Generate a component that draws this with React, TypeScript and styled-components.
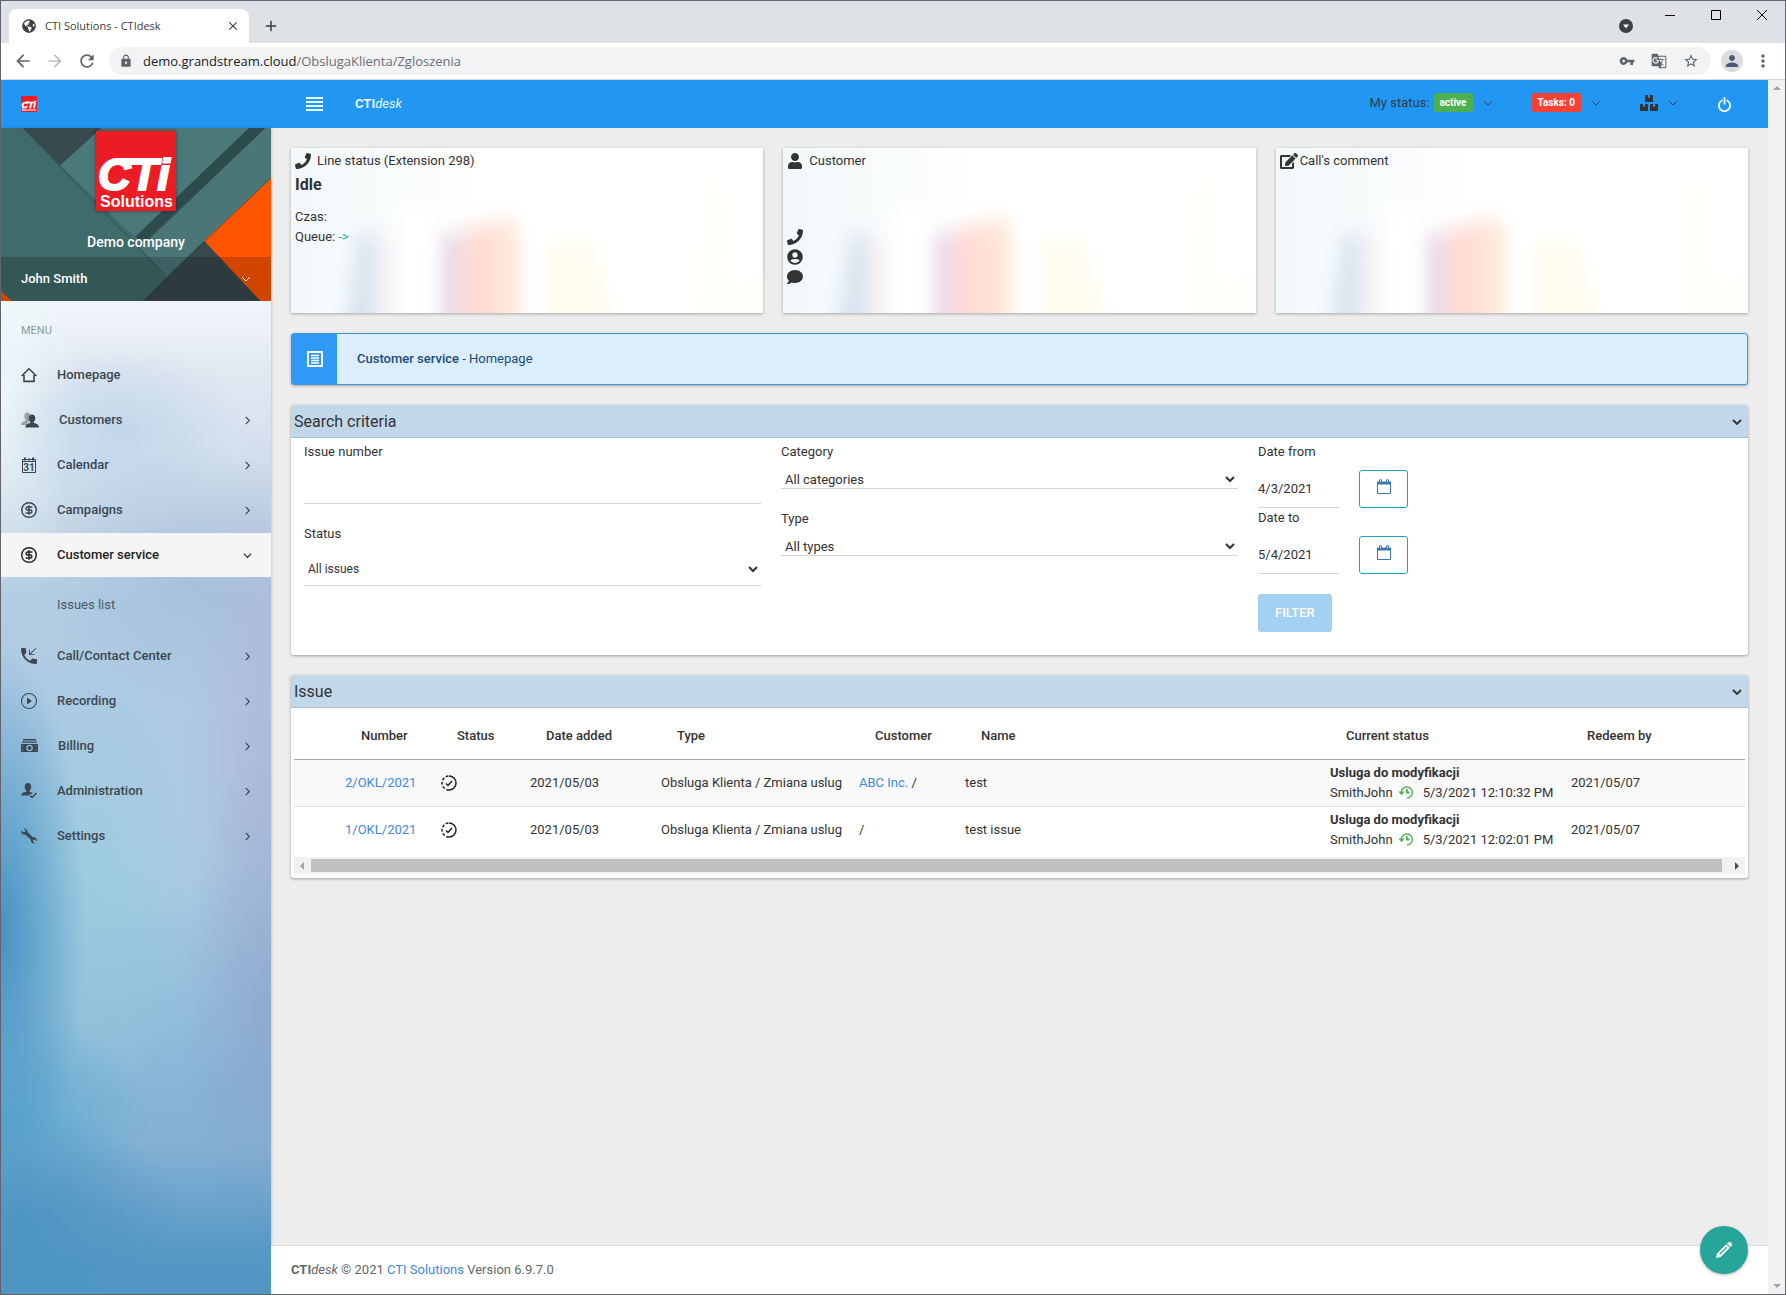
import React from 'react';
import styled, { createGlobalStyle, css } from 'styled-components';
import {
  MdAdd, MdArrowBack, MdArrowForward, MdClose, MdGTranslate, MdLock,
  MdMoreVert, MdPerson, MdPhoneCallback, MdRefresh, MdStarBorder, MdVpnKey,
} from 'react-icons/md';
import { FaBoxes, FaComment, FaEdit, FaGlobeAmericas, FaPhone, FaUser, FaUserCircle } from 'react-icons/fa';
import { ImHistory, ImPencil, ImSwitch } from 'react-icons/im';
import { BsPlayCircle } from 'react-icons/bs';
import { CircleDollarSign } from 'lucide-react';

const GlobalStyle = createGlobalStyle`
  *, *::before, *::after { box-sizing: border-box; }
  body {
    margin: 0;
    background: #ededed;
    color: #333;
    font: 13px/20px Roboto, "Liberation Sans", sans-serif;
  }
  a { color: #4289db; text-decoration: none; }
  button, input, select { font: inherit; color: inherit; }
  button { cursor: pointer; }
  svg { display: block; flex: none; }
`;

/* ---------- browser window ---------- */

const Window = styled.div`
  display: flex;
  flex-direction: column;
  min-height: 100vh;
  border: 1px solid #62656c;
`;

const PlainButton = styled.button`
  display: inline-flex;
  align-items: center;
  justify-content: center;
  padding: 0;
  border: 0;
  background: none;
`;

const TabStrip = styled.div`
  display: flex;
  align-items: flex-start;
  height: 42px;
  padding: 8px 0 0 8px;
  background: #dee1e6;
  color: #3c4043;
`;

const Tab = styled.div`
  display: flex;
  align-items: center;
  gap: 9px;
  width: 240px;
  height: 34px;
  padding: 0 9px 0 13px;
  border-radius: 8px 8px 0 0;
  background: #fff;
  font-family: "Open Sans", "Noto Sans", sans-serif;
  font-size: 11px;
`;

const TabTitle = styled.span`
  flex: 1;
`;

const NewTab = styled(PlainButton)`
  width: 28px;
  height: 34px;
  margin-left: 8px;
`;

const TabSearch = styled(PlainButton)`
  height: 34px;
  margin: 0 14px 0 auto;
`;

const WindowButton = styled(PlainButton)`
  width: 46px;
  height: 12px;
`;

const AddressRow = styled.div`
  display: flex;
  align-items: center;
  gap: 10px;
  height: 37px;
  padding: 0 12px;
  border-bottom: 1px solid #d5d8dc;
  background: #fff;
  color: #5f6368;
`;

const NavButtons = styled.div`
  display: flex;
  gap: 12px;
`;

const AddressBar = styled.div`
  display: flex;
  flex: 1;
  align-items: center;
  height: 28px;
  margin-left: 2px;
  padding: 0 12px 0 10px;
  border-radius: 14px;
  background: #f1f3f4;
  font-family: "Open Sans", "Noto Sans", sans-serif;
  font-size: 13px;
`;

const Address = styled.span`
  flex: 1;
  margin-left: 10px;
  color: #6b6f74;
  b { color: #202124; font-weight: 400; }
`;

const AddressActions = styled.div`
  display: flex;
  gap: 16px;
`;

const Avatar = styled(PlainButton)`
  width: 22px;
  height: 22px;
  border-radius: 50%;
  background: #dadce0;
  color: #4d5a73;
`;

const Viewport = styled.div`
  display: flex;
  flex: 1;
`;

const Page = styled.div`
  display: flex;
  flex: 1;
  flex-direction: column;
  min-width: 0;
`;

const PageScroll = styled.div`
  display: flex;
  flex-direction: column;
  justify-content: space-between;
  align-items: center;
  width: 17px;
  padding: 6px 0;
  background: #f1f1f1;
`;

const Arrow = styled.span<{ $dir: 'up' | 'down' | 'left' | 'right'; $color?: string }>`
  width: 0;
  height: 0;
  border: 4px solid transparent;
  ${({ $dir, $color = '#a3a3a3' }) => {
    if ($dir === 'up') return css`border-top: 0; border-bottom-color: ${$color};`;
    if ($dir === 'down') return css`border-bottom: 0; border-top-color: ${$color};`;
    if ($dir === 'left') return css`border-left: 0; border-right-color: ${$color};`;
    return css`border-right: 0; border-left-color: ${$color};`;
  }}
`;

/* ---------- application header ---------- */

const Header = styled.header`
  display: flex;
  align-items: center;
  height: 48px;
  padding: 0 36px 0 20px;
  background: #2196f3;
  color: #fff;
`;

const HeaderLeft = styled.div`
  display: flex;
  align-items: center;
  width: 285px;
`;

const Brand = styled.a`
  margin-left: 31px;
  color: #e8f8ff;
  font-weight: 700;
  i { font-weight: 400; }
`;

const HeaderTools = styled.div`
  display: flex;
  align-items: center;
  gap: 32px;
  margin-left: auto;
`;

const HeaderItem = styled.button`
  display: flex;
  align-items: center;
  gap: 10px;
  padding: 0 7px 3px 0;
  border: 0;
  background: none;
  color: #2f3d4b;
`;

const StatusText = styled.span`
  display: flex;
  align-items: center;
  gap: 4px;
`;

const Badge = styled.span<{ $color: string }>`
  padding: 0 6px;
  border-radius: 2px;
  background: ${({ $color }) => $color};
  color: #fff;
  font-size: 10px;
  font-weight: 700;
  line-height: 19px;
`;

const Body = styled.div`
  display: flex;
  flex: 1;
`;

/* ---------- sidebar ---------- */

const Sidebar = styled.aside`
  flex: none;
  width: 270px;
  box-shadow: 1px 0 2px rgba(0, 0, 0, 0.15);
  background:
    linear-gradient(to top, rgba(72, 146, 192, 0.75) 30px, rgba(76, 146, 192, 0) 150px),
    radial-gradient(160px 110px at 20px 1090px, rgba(72, 146, 192, 0.8), rgba(72, 146, 192, 0)),
    radial-gradient(85px 280px at 0 800px, rgba(60, 140, 192, 0.9), rgba(74, 150, 198, 0.55) 50%, rgba(80, 155, 200, 0)),
    radial-gradient(150px 110px at 0 990px, rgba(88, 168, 208, 0.9), rgba(88, 168, 208, 0)),
    radial-gradient(90px 260px at 100% 880px, rgba(138, 160, 200, 0.6), rgba(138, 160, 200, 0)),
    radial-gradient(90px 320px at 100% 620px, rgba(176, 172, 210, 0.55), rgba(176, 172, 210, 0)),
    radial-gradient(100px 260px at 90px 780px, rgba(146, 204, 220, 0.6), rgba(146, 204, 220, 0)),
    radial-gradient(150px 130px at 190px 450px, rgba(158, 184, 214, 0.6), rgba(158, 184, 214, 0)),
    radial-gradient(120px 90px at 120px 300px, rgba(180, 208, 232, 0.6), rgba(180, 208, 232, 0)),
    radial-gradient(80px 200px at 0 270px, rgba(238, 250, 250, 0.8), rgba(238, 250, 250, 0)),
    linear-gradient(#f0f6fa 173px, #e1e7f1 250px, #d3dfee 330px, #c5d6e6 400px, #b0cde3 470px, #aecae2 600px, #abcbe2 740px, #98c0dd 850px, #88b4d6 960px, #82afd4 1060px, #6da4cc);
`;

const Profile = styled.div`
  position: relative;
  display: flex;
  flex-direction: column;
  align-items: center;
  height: 173px;
  padding-top: 3px;
  overflow: hidden;
  color: #fff;
`;

const ProfileArt = styled.svg`
  position: absolute;
  inset: 0;
  width: 100%;
  height: 100%;
`;

const Company = styled.div`
  position: relative;
  margin-top: 21px;
  font-size: 14px;
  font-weight: 500;
`;

const LogoBox = styled.div`
  position: relative;
  box-shadow: 0 0 3px rgba(0, 0, 0, 0.5);
`;

const UserBar = styled(PlainButton)`
  position: relative;
  justify-content: space-between;
  width: 100%;
  height: 44px;
  margin-top: auto;
  padding: 0 20px;
  background: rgba(0, 0, 0, 0.18);
  color: #fff;
  font-weight: 500;
`;

const MenuTitle = styled.div`
  padding: 20px 20px 12px;
  color: #8d959c;
  font-size: 11px;
`;

const MenuList = styled.nav`
  display: flex;
  flex-direction: column;
  gap: 1px;
`;

const MenuLink = styled.a<{ $active?: boolean }>`
  display: flex;
  align-items: center;
  gap: 20px;
  height: 44px;
  padding: 0 19px 0 20px;
  background: ${({ $active }) => ($active ? '#f5f5f5' : 'none')};
  color: ${({ $active }) => ($active ? '#222' : '#3b4750')};
  font-weight: 500;
  span { flex: 1; }
`;

const SubLink = styled.a`
  padding: 17px 20px 18px 56px;
  color: #4c5862;
`;

/* ---------- content ---------- */

const Main = styled.main`
  display: flex;
  flex: 1;
  flex-direction: column;
  min-width: 0;
`;

const Content = styled.div`
  display: flex;
  flex: 1;
  flex-direction: column;
  gap: 20px;
  padding: 20px;
`;

const Cards = styled.div`
  display: grid;
  grid-template-columns: repeat(3, 1fr);
  gap: 20px;
`;

const Card = styled.section`
  position: relative;
  height: 165px;
  padding: 3px 4px;
  background: #fff;
  box-shadow: 0 1px 3px rgba(0, 0, 0, 0.3);
  overflow: hidden;
`;

const CardArt = styled.svg`
  position: absolute;
  inset: 0;
  width: 100%;
  height: 100%;
`;

const CardBody = styled.div`
  position: relative;
`;

const CardTitle = styled.div<{ $gap: number }>`
  display: flex;
  align-items: center;
  gap: ${({ $gap }) => $gap}px;
`;

const Idle = styled.h2`
  margin: 4px 0 12px;
  font-size: 16px;
  line-height: 20px;
  font-weight: 700;
`;

const QueueLink = styled.a`
  color: #26a6b8;
`;

const ContactIcons = styled.div`
  display: flex;
  flex-direction: column;
  gap: 4px;
  padding-top: 58px;
`;

const Alert = styled.section`
  display: flex;
  align-items: center;
  height: 52px;
  border: 1px solid #4197d6;
  border-radius: 3px;
  background: #daeefd;
  box-shadow: 0 1px 3px rgba(0, 0, 0, 0.3);
  color: #1d4d76;
  b { font-weight: 500; }
`;

const AlertIcon = styled.div`
  display: flex;
  align-items: center;
  align-self: stretch;
  justify-content: center;
  width: 45px;
  margin-right: 20px;
  background: #2e9af5;
`;

const Panel = styled.section`
  border-radius: 3px;
  background: #fff;
  box-shadow: 0 1px 3px rgba(0, 0, 0, 0.35);
  overflow: hidden;
`;

const PanelHeader = styled.header`
  display: flex;
  align-items: center;
  justify-content: space-between;
  height: 33px;
  padding: 1px 6px 0 3px;
  border-bottom: 1px solid #a9bccd;
  background: #c1d7ea;
`;

const PanelTitle = styled.h3`
  margin: 0;
  font-size: 16px;
  font-weight: 400;
`;

const SearchForm = styled.form`
  display: grid;
  grid-template-columns: repeat(3, 1fr);
  gap: 20px;
  padding: 4px 33px 23px 13px;
`;

const Column = styled.div<{ $gap: number }>`
  display: flex;
  flex-direction: column;
  align-items: stretch;
  gap: ${({ $gap }) => $gap}px;
`;

const Field = styled.div`
  display: flex;
  flex-direction: column;
`;

const line = css`
  border: 0;
  border-bottom: 1px solid #d5d5d5;
  border-radius: 0;
  background: #fff;
  outline: 0;
`;

const TextInput = styled.input`
  ${line}
  height: 42px;
  padding: 0;
`;

const Select = styled.select<{ $tall?: boolean }>`
  ${line}
  height: ${({ $tall }) => ($tall ? 34 : 20)}px;
  margin-top: ${({ $tall }) => ($tall ? 8 : 7)}px;
  padding: ${({ $tall }) => ($tall ? 0 : 2)}px 1px 0 0;
  font-size: ${({ $tall }) => ($tall ? 12 : 13)}px;
`;

const DateRow = styled.div`
  display: flex;
  gap: 20px;
  margin-top: 8px;
`;

const DateInput = styled.input`
  ${line}
  width: 81px;
  height: 38px;
  padding: 0;
`;

const DateButton = styled(PlainButton)`
  width: 49px;
  height: 38px;
  padding-bottom: 4px;
  border: 1px solid #1ba5c1;
  border-radius: 3px;
  background: #fff;
`;

const FilterButton = styled.button`
  align-self: flex-start;
  height: 38px;
  margin-top: 20px;
  padding: 0 17px;
  border: 0;
  border-radius: 3px;
  background: #a3d1f2;
  color: #fff;
  font-weight: 500;
`;

const TableWrap = styled.div`
  padding: 0 3px 4px;
`;

const Table = styled.table`
  width: 100%;
  border-collapse: collapse;
  table-layout: fixed;
  th, td { padding: 0 9px; text-align: left; white-space: nowrap; }
  th {
    height: 51px;
    padding: 6px 0 0 25px;
    border-bottom: 1px solid #aaa;
    font-weight: 500;
  }
  td { height: 47px; padding-right: 0; }
  tbody tr + tr td { border-top: 1px solid #ddd; }
  tbody tr:nth-child(odd) { background: #f9f9f9; }
`;

const StatusUser = styled.div`
  display: flex;
  align-items: center;
  svg { margin: 0 10px 0 5px; color: #4caf50; }
`;

const TableScroll = styled.div`
  display: flex;
  align-items: center;
  height: 17px;
  margin-top: 4px;
  padding: 0 6px;
  background: #f1f1f1;
`;

const Thumb = styled.div`
  flex: 1;
  height: 13px;
  margin: 0 13px 0 7px;
  background: #c1c1c1;
`;

const Footer = styled.footer`
  position: relative;
  padding: 14px 20px;
  border-top: 1px solid #ddd;
  background: #fff;
  color: #666;
`;

const Fab = styled(PlainButton)`
  position: absolute;
  right: 20px;
  bottom: 20px;
  width: 48px;
  height: 48px;
  border-radius: 50%;
  background: #26a69a;
  box-shadow: 0 1px 3px rgba(0, 0, 0, 0.3);
  color: #fff;
`;

/* ---------- drawings ---------- */

const Chevron = ({ dir, size = 10, weight = 1 }: { dir: 'right' | 'down'; size?: number; weight?: number }) => (
  <svg width={size} height={size} viewBox="0 0 10 10" fill="none" stroke="currentColor" strokeWidth={weight}>
    <path d={dir === 'right' ? 'M3 1l4 4-4 4' : 'M1 3l4 4 4-4'} />
  </svg>
);

const Logo = ({ size }: { size: number }) => (
  <svg width={size} height={size} viewBox="0 0 80 80" role="img" aria-label="CTi Solutions">
    <rect width="80" height="80" fill="#ec1c24" />
    <g fill="#fff" fontFamily="Liberation Sans, Arial, sans-serif" fontWeight="700">
      <text x="2" y="59" fontSize="45" fontStyle="italic" stroke="#fff" strokeWidth="2">CTi</text>
      <rect x="24" y="27" width="14" height="7" />
      <text x="4" y="76" fontSize="16">Solutions</text>
    </g>
  </svg>
);

const HomeIcon = () => (
  <svg width="16" height="16" viewBox="0 0 16 16" fill="none" stroke="currentColor" strokeWidth="1.6">
    <path d="M.6 9L8 1.8 15.4 9M3 8v6.400h3.400M13 8v6.400H9.600M5 14.400h6" />
  </svg>
);

const UsersIcon = () => (
  <svg width="18" height="16" viewBox="0 0 18 16">
    <path fill="#9aa3ab" d="M6.500.5c2 0 3 1.500 3 3.500 0 1.600-.8 3-1.500 3.800v1.700L5 13H0c0-2.500 1.500-3.400 4.600-4V7.800C3.900 7 3.300 5.600 3.300 4 3.300 2 4.500.5 6.500.5z" />
    <path fill="currentColor" d="M11 2.500c2.200 0 3.300 1.500 3.300 3.700 0 1.700-.8 3-1.600 3.800v1.100c3.200.4 5 1.500 5.300 4.400H4.300c.2-2.900 2-4 5-4.400V10c-.9-.8-1.600-2.100-1.600-3.800 0-2.200 1.100-3.700 3.300-3.700z" />
  </svg>
);

const Calendar31Icon = () => (
  <svg width="16" height="16" viewBox="0 0 16 16">
    <path fill="none" stroke="currentColor" d="M1.500 2.500h13v13h-13zM1.500 4.500h13" />
    <path stroke="currentColor" strokeWidth="2" d="M4 .5v3M12 .5v3M8 1.500v2" />
    <text x="8" y="13.500" textAnchor="middle" fontSize="10" fontWeight="700" fill="currentColor">31</text>
  </svg>
);

const DollarIcon = () => <CircleDollarSign size={16} viewBox="1 1 22 22" strokeWidth={2} />;

const CashIcon = () => (
  <svg width="17" height="16" viewBox="0 0 17 16">
    <path fill="currentColor" d="M2 1h13v1.400H2zM1 3.400h15v1.400H1z" />
    <path fill="currentColor" fillRule="evenodd" d="M0 6h17v8H0zM8.500 6.700a3.300 3.300 0 100 6.600 3.300 3.300 0 000-6.600zM1.500 7.500v1.300l1.300-1.300zM15.500 7.500v1.300l-1.300-1.300zM1.500 12.500v-1.300l1.300 1.300zM15.500 12.500v-1.300l-1.300 1.300z" />
    <circle cx="8.500" cy="10" r="2" fill="currentColor" />
  </svg>
);

const UserCheckIcon = () => (
  <svg width="16" height="16" viewBox="0 0 16 16" fill="currentColor">
    <path d="M7 0c2 0 3.200 1.500 3.200 3.700 0 1.700-.8 3.200-1.600 4v1.200c1.400.2 2.600.6 3.400 1.200L10.500 11.500 9 10.600 8 12.600H0c.2-2.400 2-3.400 5.300-3.700V7.700c-.9-.8-1.600-2.300-1.600-4C3.700 1.500 5 0 7 0z" />
    <path d="M9 12.500l2 2 4.500-4.500" fill="none" stroke="currentColor" strokeWidth="1.500" />
  </svg>
);

const WrenchIcon = () => (
  <svg width="16" height="16" viewBox="0 0 16 16" fill="currentColor">
    <path d="M2.500.5l2 2L4 4l-1.500.6L.3 2.500C-.3 5 1.500 7.100 4.200 6.600l5.500 5C9.400 14.200 11.500 16 14 15.500l-2-2 .5-1.500 1.500-.5 1.900 2c.4-2.500-1.300-4.600-4-4.200l-5.400-5C6.800 1.700 4.800 0 2.500.5z" />
  </svg>
);

const NotesIcon = () => (
  <svg width="18" height="18" viewBox="0 0 18 18" fill="none" stroke="#fff">
    <path strokeWidth="2" d="M2 2h14v14H2z" />
    <path strokeWidth="1.300" d="M5 5.500h8M5 8h8M5 10.500h8M5 13h8" />
  </svg>
);

const CalendarIcon = () => (
  <svg width="16" height="16" viewBox="0 0 16 16" fill="none" stroke="#3a78b5">
    <path d="M1.500 3.500h13v11h-13z" />
    <path strokeWidth="3" d="M1 4h14" />
    <path strokeWidth="1" d="M3.500 3V.8h2V3M10.500 3V.8h2V3" fill="#fff" />
  </svg>
);

const ProgressCheckIcon = () => (
  <svg width="16" height="16" viewBox="0 0 16 16" fill="none" stroke="#222" strokeWidth="1.500">
    <path d="M8 1a7 7 0 010 14" />
    <path d="M8 15A7 7 0 018 1" strokeDasharray="2.800 1.800" />
    <path d="M5 8.500l2 2 4-4.500" />
  </svg>
);

const MenuIcon = () => (
  <svg width="18" height="14" viewBox="0 0 18 14" fill="#e8f8ff">
    <path d="M0 0h17v2H0zM0 4h17v2H0zM0 8h17v2H0zM0 12h17v2H0z" />
  </svg>
);

const ProfileBackground = () => (
  <ProfileArt viewBox="0 0 270 173" preserveAspectRatio="none" aria-hidden="true">
    <rect width="270" height="173" fill="#3f6b6b" />
    <path fill="#37484e" d="M22 0h78L59 37z" />
    <path fill="#4b7878" d="M100 0h150L135 110 59 37z" />
    <path fill="#2d4b4c" d="M248 0h16L146 115l-12-6z" />
    <path fill="#4a7677" d="M264 0h6v50l-67 63-38 36-26-30z" />
    <path fill="#ff5500" d="M270 50v123h-12l-55-60zM0 163l11 10H0z" />
    <path fill="#37494e" d="M203 113l56 60H142z" />
    <path fill="none" stroke="#223c3d" strokeOpacity=".5" d="M22 0l143 148M100 0L59 37M264 0L141 118M142 173L270 50M203 113l56 60" />
  </ProfileArt>
);

const CardBackground = ({ id }: { id: string }) => (
  <CardArt viewBox="0 0 472 165" preserveAspectRatio="none" aria-hidden="true">
    <defs>
      <filter id={id} x="-50%" y="-50%" width="200%" height="200%">
        <feGaussianBlur stdDeviation="8 10" />
      </filter>
      <linearGradient id={`${id}-sky`}>
        <stop offset="0" stopColor="#f2f8fa" />
        <stop offset="1" stopColor="#fff" />
      </linearGradient>
    </defs>
    <rect width="200" height="165" fill={`url(#${id}-sky)`} />
    <g filter={`url(#${id})`}>
      <path fill="#dce5f0" d="M66 86h20v100H52z" />
      <path fill="#f8eef1" d="M90 90h12v90H90z" />
      <path fill="#fff" d="M110 60h32v130h-32z" />
      <path fill="#ecdae8" d="M150 86h30v110h-30z" />
      <path fill="#ffdcd5" d="M172 82l46-12v130h-46z" />
      <path fill="#fee7d8" d="M204 74h24v110h-24z" />
      <path fill="#fffbef" d="M258 92h42l28 100h-70z" />
      <path fill="#fffefa" d="M410 30h25v100h60v60H400z" />
    </g>
  </CardArt>
);

/* ---------- data ---------- */

type Item = { label: string; icon: React.ReactNode; leaf?: boolean; active?: boolean };

const menuTop: Item[] = [
  { label: 'Homepage', icon: <HomeIcon />, leaf: true },
  { label: 'Customers', icon: <UsersIcon /> },
  { label: 'Calendar', icon: <Calendar31Icon /> },
  { label: 'Campaigns', icon: <DollarIcon /> },
  { label: 'Customer service', icon: <DollarIcon />, active: true },
];

const menuBottom: Item[] = [
  { label: 'Call/Contact Center', icon: <MdPhoneCallback size={16} viewBox="3 3 18 18" /> },
  { label: 'Recording', icon: <BsPlayCircle size={16} /> },
  { label: 'Billing', icon: <CashIcon /> },
  { label: 'Administration', icon: <UserCheckIcon /> },
  { label: 'Settings', icon: <WrenchIcon /> },
];

const columns: { label: string; width?: number }[] = [
  { label: '', width: 42 },
  { label: 'Number', width: 96 },
  { label: 'Status', width: 89 },
  { label: 'Date added', width: 131 },
  { label: 'Type', width: 198 },
  { label: 'Customer', width: 106 },
  { label: 'Name' },
  { label: 'Current status', width: 241 },
  { label: 'Redeem by', width: 183 },
];

const issues = [
  { no: '2/OKL/2021', customer: 'ABC Inc.', name: 'test', time: '5/3/2021 12:10:32 PM' },
  { no: '1/OKL/2021', customer: '', name: 'test issue', time: '5/3/2021 12:02:01 PM' },
];

const MenuItem = ({ label, icon, leaf, active }: Item) => (
  <MenuLink href="#" $active={active}>
    {icon}
    <span>{label}</span>
    {!leaf && <Chevron dir={active ? 'down' : 'right'} weight={1.3} size={9} />}
  </MenuLink>
);

const Browser = () => (
  <>
    <TabStrip>
      <Tab>
        <FaGlobeAmericas size={14} />
        <TabTitle>CTI Solutions - CTIdesk</TabTitle>
        <PlainButton aria-label="Close tab"><MdClose size={14} /></PlainButton>
      </Tab>
      <NewTab aria-label="New tab"><MdAdd size={18} /></NewTab>
      <TabSearch aria-label="Search tabs">
        <svg width="14" height="14" viewBox="0 0 14 14">
          <circle cx="7" cy="7" r="7" fill="#3c4043" />
          <path d="M4 5.500h6L7 9.500z" fill="#fff" />
        </svg>
      </TabSearch>
      <WindowButton aria-label="Minimize">
        <svg width="10" height="10" stroke="#000"><path d="M0 5.500h10" /></svg>
      </WindowButton>
      <WindowButton aria-label="Maximize">
        <svg width="10" height="10" stroke="#000" fill="none"><path d="M.5.5h9v9h-9z" /></svg>
      </WindowButton>
      <WindowButton aria-label="Close">
        <svg width="10" height="10" stroke="#000"><path d="M0 0l10 10M10 0L0 10" /></svg>
      </WindowButton>
    </TabStrip>
    <AddressRow>
      <NavButtons>
        <PlainButton aria-label="Back"><MdArrowBack size={20} /></PlainButton>
        <PlainButton aria-label="Forward"><MdArrowForward size={20} color="#bcbec1" /></PlainButton>
        <PlainButton aria-label="Reload"><MdRefresh size={20} /></PlainButton>
      </NavButtons>
      <AddressBar>
        <MdLock size={14} />
        <Address><b>demo.grandstream.cloud</b>/ObslugaKlienta/Zgloszenia</Address>
        <AddressActions>
          <MdVpnKey size={16} />
          <MdGTranslate size={16} />
          <MdStarBorder size={16} />
        </AddressActions>
      </AddressBar>
      <Avatar aria-label="Profile"><MdPerson size={18} /></Avatar>
      <PlainButton aria-label="Browser menu"><MdMoreVert size={20} /></PlainButton>
    </AddressRow>
  </>
);

export default function App() {
  return (
    <Window>
      <GlobalStyle />
      <Browser />
      <Viewport>
        <Page>
          <Header>
            <HeaderLeft><Logo size={16} /></HeaderLeft>
            <PlainButton aria-label="Toggle menu"><MenuIcon /></PlainButton>
            <Brand href="#">CTI<i>desk</i></Brand>
            <HeaderTools>
              <HeaderItem>
                <StatusText>My status: <Badge $color="#4caf50">active</Badge></StatusText>
                <Chevron dir="down" />
              </HeaderItem>
              <HeaderItem>
                <Badge $color="#f44336">Tasks: 0</Badge>
                <Chevron dir="down" />
              </HeaderItem>
              <HeaderItem aria-label="Modules">
                <FaBoxes size={18} color="#333" />
                <Chevron dir="down" />
              </HeaderItem>
              <PlainButton aria-label="Log out"><ImSwitch size={15} color="#e8f8ff" /></PlainButton>
            </HeaderTools>
          </Header>
          <Body>
            <Sidebar>
              <Profile>
                <ProfileBackground />
                <LogoBox><Logo size={80} /></LogoBox>
                <Company>Demo company</Company>
                <UserBar>John Smith <Chevron dir="down" /></UserBar>
              </Profile>
              <MenuTitle>MENU</MenuTitle>
              <MenuList>
                {menuTop.map((item) => <MenuItem key={item.label} {...item} />)}
                <SubLink href="#">Issues list</SubLink>
                {menuBottom.map((item) => <MenuItem key={item.label} {...item} />)}
              </MenuList>
            </Sidebar>
            <Main>
              <Content>
                <Cards>
                  <Card>
                    <CardBackground id="blur-line" />
                    <CardBody>
                      <CardTitle $gap={6}><FaPhone size={16} /> Line status (Extension 298)</CardTitle>
                      <Idle>Idle</Idle>
                      <div>Czas:</div>
                      <div>Queue: <QueueLink href="#">-&gt;</QueueLink></div>
                    </CardBody>
                  </Card>
                  <Card>
                    <CardBackground id="blur-customer" />
                    <CardBody>
                      <CardTitle $gap={6}><FaUser size={16} /> Customer</CardTitle>
                      <ContactIcons>
                        <FaPhone size={16} />
                        <FaUserCircle size={16} />
                        <FaComment size={16} />
                      </ContactIcons>
                    </CardBody>
                  </Card>
                  <Card>
                    <CardBackground id="blur-comment" />
                    <CardBody>
                      <CardTitle $gap={2}><FaEdit size={18} /> Call's comment</CardTitle>
                    </CardBody>
                  </Card>
                </Cards>
                <Alert>
                  <AlertIcon><NotesIcon /></AlertIcon>
                  <span><b>Customer service</b> - Homepage</span>
                </Alert>
                <Panel>
                  <PanelHeader>
                    <PanelTitle>Search criteria</PanelTitle>
                    <PlainButton aria-label="Collapse search"><Chevron dir="down" weight={1.8} /></PlainButton>
                  </PanelHeader>
                  <SearchForm>
                    <Column $gap={20}>
                      <Field>
                        <label htmlFor="issue-no">Issue number</label>
                        <TextInput id="issue-no" />
                      </Field>
                      <Field>
                        <label htmlFor="status">Status</label>
                        <Select id="status" $tall><option>All issues</option></Select>
                      </Field>
                    </Column>
                    <Column $gap={20}>
                      <Field>
                        <label htmlFor="category">Category</label>
                        <Select id="category"><option>All categories</option></Select>
                      </Field>
                      <Field>
                        <label htmlFor="type">Type</label>
                        <Select id="type"><option>All types</option></Select>
                      </Field>
                    </Column>
                    <Column $gap={0}>
                      <Field>
                        <label htmlFor="date-from">Date from</label>
                        <DateRow>
                          <DateInput id="date-from" defaultValue="4/3/2021" />
                          <DateButton type="button" aria-label="Pick start date"><CalendarIcon /></DateButton>
                        </DateRow>
                      </Field>
                      <Field>
                        <label htmlFor="date-to">Date to</label>
                        <DateRow>
                          <DateInput id="date-to" defaultValue="5/4/2021" />
                          <DateButton type="button" aria-label="Pick end date"><CalendarIcon /></DateButton>
                        </DateRow>
                      </Field>
                      <FilterButton type="button">FILTER</FilterButton>
                    </Column>
                  </SearchForm>
                </Panel>
                <Panel>
                  <PanelHeader>
                    <PanelTitle>Issue</PanelTitle>
                    <PlainButton aria-label="Collapse issues"><Chevron dir="down" weight={1.8} /></PlainButton>
                  </PanelHeader>
                  <TableWrap>
                    <Table>
                      <colgroup>
                        {columns.map((c) => <col key={c.label} width={c.width} />)}
                      </colgroup>
                      <thead>
                        <tr>{columns.map((c) => <th key={c.label}>{c.label}</th>)}</tr>
                      </thead>
                      <tbody>
                        {issues.map((issue) => (
                          <tr key={issue.no}>
                            <td />
                            <td><a href="#">{issue.no}</a></td>
                            <td><ProgressCheckIcon /></td>
                            <td>2021/05/03</td>
                            <td>Obsluga Klienta / Zmiana uslug</td>
                            <td>{issue.customer && <a href="#">{issue.customer}</a>} /</td>
                            <td>{issue.name}</td>
                            <td>
                              <b>Usluga do modyfikacji</b>
                              <StatusUser>SmithJohn <ImHistory size={15} />{issue.time}</StatusUser>
                            </td>
                            <td>2021/05/07</td>
                          </tr>
                        ))}
                      </tbody>
                    </Table>
                    <TableScroll>
                      <Arrow $dir="left" />
                      <Thumb />
                      <Arrow $dir="right" $color="#505050" />
                    </TableScroll>
                  </TableWrap>
                </Panel>
              </Content>
              <Footer>
                <b>CTI</b><i>desk</i> © 2021 <a href="#">CTI Solutions</a> Version 6.9.7.0
                <Fab aria-label="Create"><ImPencil size={16} /></Fab>
              </Footer>
            </Main>
          </Body>
        </Page>
        <PageScroll>
          <Arrow $dir="up" />
          <Arrow $dir="down" />
        </PageScroll>
      </Viewport>
    </Window>
  );
}
